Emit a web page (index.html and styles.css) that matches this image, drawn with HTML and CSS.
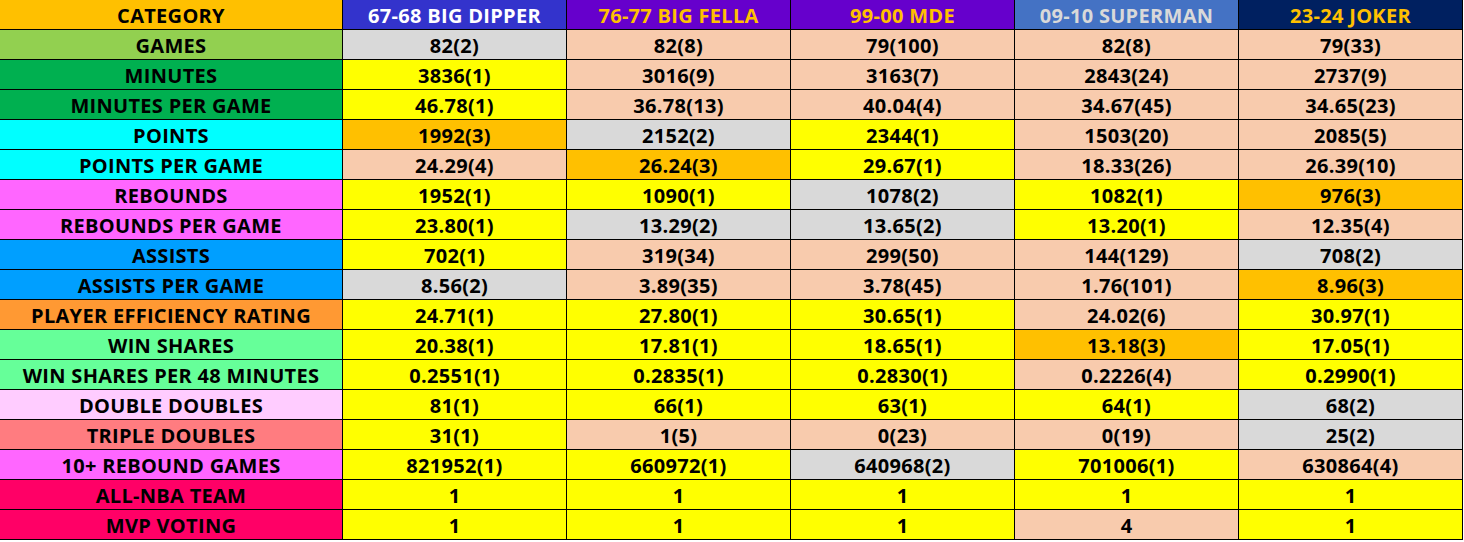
FILE: index.html
```html
<!DOCTYPE html>
<html>
<head>
<meta charset="utf-8">
<link rel="stylesheet" href="styles.css">
</head>
<body>
<div class="sheet">
  <div class="c h-cat">CATEGORY</div>
  <div class="c h1">67-68 BIG DIPPER</div>
  <div class="c h2">76-77 BIG FELLA</div>
  <div class="c h3">99-00 MDE</div>
  <div class="c h4">09-10 SUPERMAN</div>
  <div class="c h5">23-24 JOKER</div>

  <div class="c k-games">GAMES</div>
  <div class="c g">82(2)</div><div class="c p">82(8)</div><div class="c p">79(100)</div><div class="c p">82(8)</div><div class="c p">79(33)</div>

  <div class="c k-min">MINUTES</div>
  <div class="c y">3836(1)</div><div class="c p">3016(9)</div><div class="c p">3163(7)</div><div class="c p">2843(24)</div><div class="c p">2737(9)</div>

  <div class="c k-min">MINUTES PER GAME</div>
  <div class="c y">46.78(1)</div><div class="c p">36.78(13)</div><div class="c p">40.04(4)</div><div class="c p">34.67(45)</div><div class="c p">34.65(23)</div>

  <div class="c k-pts">POINTS</div>
  <div class="c o">1992(3)</div><div class="c g">2152(2)</div><div class="c y">2344(1)</div><div class="c p">1503(20)</div><div class="c p">2085(5)</div>

  <div class="c k-pts">POINTS PER GAME</div>
  <div class="c p">24.29(4)</div><div class="c o">26.24(3)</div><div class="c y">29.67(1)</div><div class="c p">18.33(26)</div><div class="c p">26.39(10)</div>

  <div class="c k-reb">REBOUNDS</div>
  <div class="c y">1952(1)</div><div class="c y">1090(1)</div><div class="c g">1078(2)</div><div class="c y">1082(1)</div><div class="c o">976(3)</div>

  <div class="c k-reb">REBOUNDS PER GAME</div>
  <div class="c y">23.80(1)</div><div class="c g">13.29(2)</div><div class="c g">13.65(2)</div><div class="c y">13.20(1)</div><div class="c p">12.35(4)</div>

  <div class="c k-ast">ASSISTS</div>
  <div class="c y">702(1)</div><div class="c p">319(34)</div><div class="c p">299(50)</div><div class="c p">144(129)</div><div class="c g">708(2)</div>

  <div class="c k-ast">ASSISTS PER GAME</div>
  <div class="c g">8.56(2)</div><div class="c p">3.89(35)</div><div class="c p">3.78(45)</div><div class="c p">1.76(101)</div><div class="c o">8.96(3)</div>

  <div class="c k-per">PLAYER EFFICIENCY RATING</div>
  <div class="c y">24.71(1)</div><div class="c y">27.80(1)</div><div class="c y">30.65(1)</div><div class="c p">24.02(6)</div><div class="c y">30.97(1)</div>

  <div class="c k-ws">WIN SHARES</div>
  <div class="c y">20.38(1)</div><div class="c y">17.81(1)</div><div class="c y">18.65(1)</div><div class="c o">13.18(3)</div><div class="c y">17.05(1)</div>

  <div class="c k-ws">WIN SHARES PER 48 MINUTES</div>
  <div class="c y">0.2551(1)</div><div class="c y">0.2835(1)</div><div class="c y">0.2830(1)</div><div class="c p">0.2226(4)</div><div class="c y">0.2990(1)</div>

  <div class="c k-dd">DOUBLE DOUBLES</div>
  <div class="c y">81(1)</div><div class="c y">66(1)</div><div class="c y">63(1)</div><div class="c y">64(1)</div><div class="c g">68(2)</div>

  <div class="c k-td">TRIPLE DOUBLES</div>
  <div class="c y">31(1)</div><div class="c p">1(5)</div><div class="c p">0(23)</div><div class="c p">0(19)</div><div class="c g">25(2)</div>

  <div class="c k-reb">10+ REBOUND GAMES</div>
  <div class="c y">821952(1)</div><div class="c y">660972(1)</div><div class="c g">640968(2)</div><div class="c y">701006(1)</div><div class="c p">630864(4)</div>

  <div class="c k-nba">ALL-NBA TEAM</div>
  <div class="c y">1</div><div class="c y">1</div><div class="c y">1</div><div class="c y">1</div><div class="c y">1</div>

  <div class="c k-nba">MVP VOTING</div>
  <div class="c y">1</div><div class="c y">1</div><div class="c y">1</div><div class="c p">4</div><div class="c y">1</div>
</div>
</body>
</html>
```

FILE: styles.css
```css
html, body {
  margin: 0;
  padding: 0;
  background: #ffffff;
}

.sheet {
  display: grid;
  grid-template-columns: 343px repeat(5, 224px);
  grid-auto-rows: 30px;
  font-family: "Open Sans", "Noto Sans CJK KR", sans-serif;
  font-weight: 700;
  font-size: 20px;
  line-height: 1;
  letter-spacing: 0.3px;
  color: #000000;
}

.c {
  border-right: 1px solid #000000;
  border-bottom: 1px solid #000000;
  display: flex;
  align-items: center;
  justify-content: center;
  padding-top: 3px;
  white-space: nowrap;
  overflow: hidden;
}

.h-cat { background: #ffc000; }
.h1 { background: #3333cc; color: #ffffff; }
.h2 { background: #6600cc; color: #ffc000; }
.h3 { background: #6600cc; color: #ffc000; }
.h4 { background: #4472c4; color: #d9d9d9; }
.h5 { background: #002060; color: #ffc000; }

.k-games { background: #92d050; }
.k-min { background: #00b050; }
.k-pts { background: #00ffff; }
.k-reb { background: #ff66ff; }
.k-ast { background: #009fff; }
.k-per { background: #ff9933; }
.k-ws { background: #66ff99; }
.k-dd { background: #ffccff; }
.k-td { background: #ff7c80; }
.k-nba { background: #ff0066; }

.y { background: #ffff00; }
.p { background: #f8cbad; }
.g { background: #d9d9d9; }
.o { background: #ffc000; }
```
